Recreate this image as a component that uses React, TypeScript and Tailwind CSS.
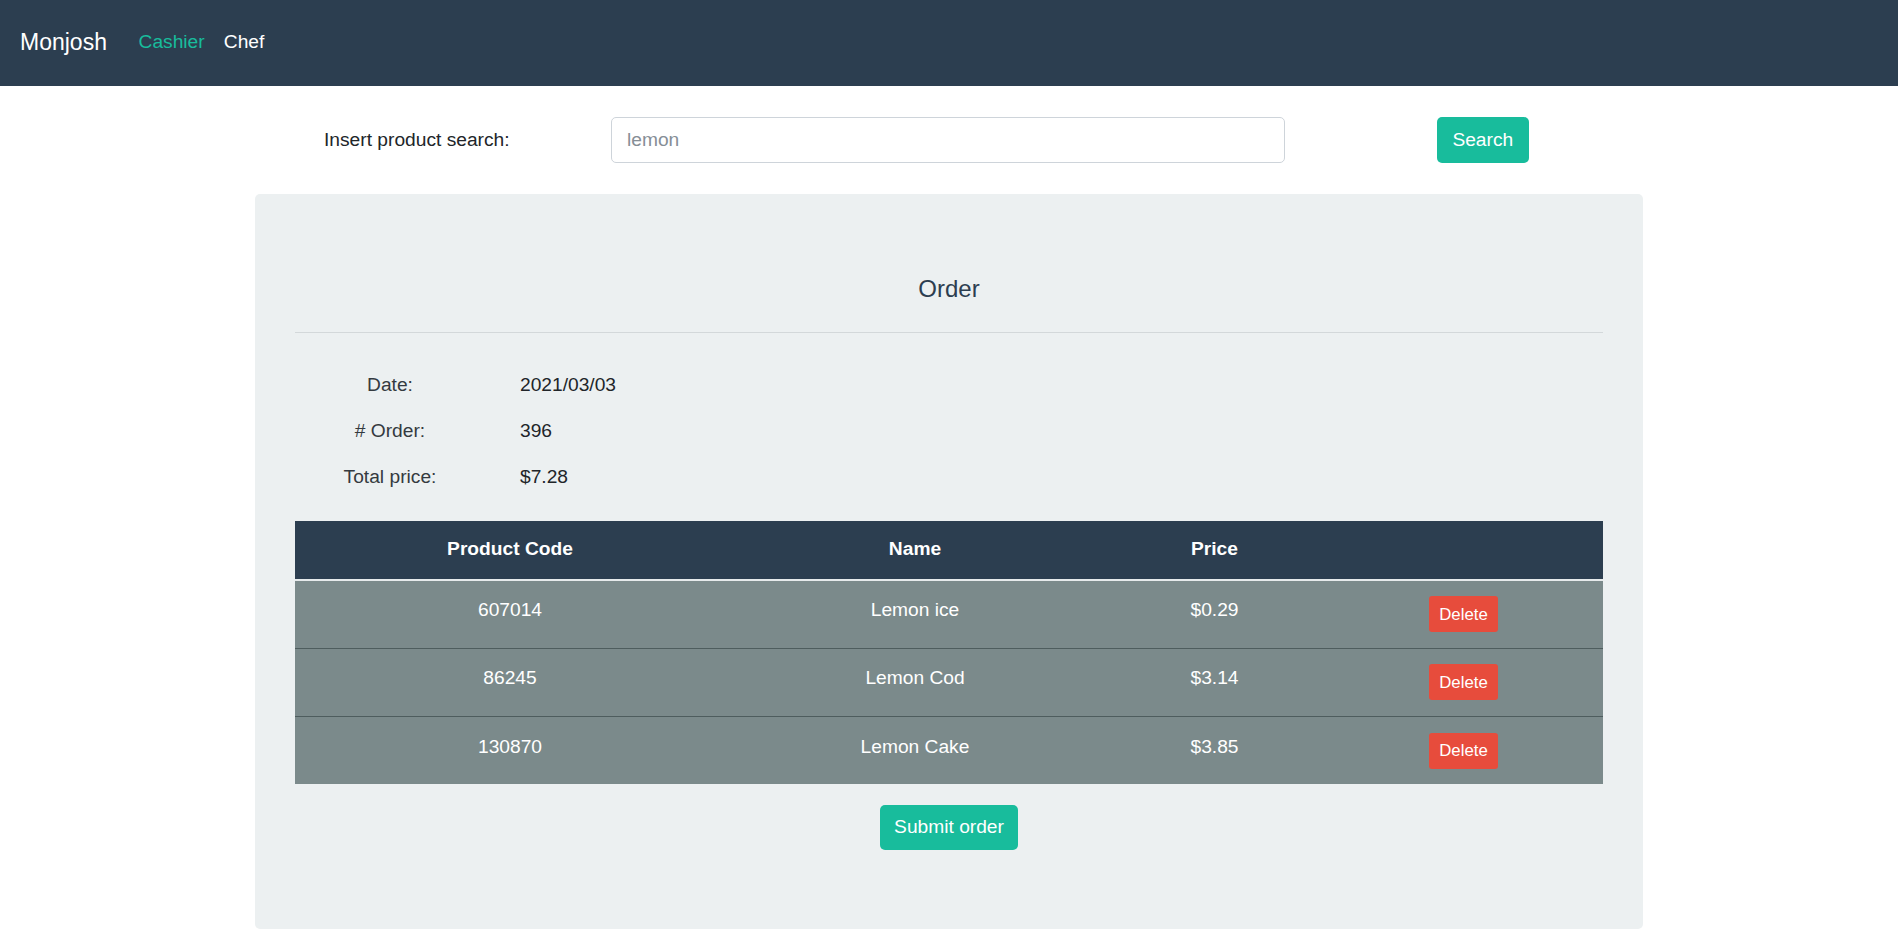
type Item = {
  code: string;
  name: string;
  price: string;
};

const items: Item[] = [
  { code: "607014", name: "Lemon ice", price: "$0.29" },
  { code: "86245", name: "Lemon Cod", price: "$3.14" },
  { code: "130870", name: "Lemon Cake", price: "$3.85" },
];

const info = [
  { label: "Date:", value: "2021/03/03" },
  { label: "# Order:", value: "396" },
  { label: "Total price:", value: "$7.28" },
];

export default function App() {
  return (
    <div className="min-h-screen bg-white font-['Liberation_Sans',Arial,sans-serif] text-[19.2px] leading-[1.5] text-[#212529]">
      {/* Navbar */}
      <nav className="h-[86px] bg-[#2c3e50] flex items-center pl-[20px] pb-[2px]">
        <span className="text-[23px] text-white mr-[22px]">Monjosh</span>
        <a href="#" className="px-[9.6px] text-[#18bc9c]">
          Cashier
        </a>
        <a href="#" className="px-[9.6px] text-white">
          Chef
        </a>
      </nav>

      <div className="w-[1388px] mx-auto">
        {/* Search */}
        <div className="flex items-center mt-[31px] h-[46px]">
          <label className="w-[356px] pl-[69px]">Insert product search:</label>
          <input
            type="text"
            placeholder="lemon"
            className="w-[674px] h-[46px] px-[15px] bg-white border border-[#ced4da] rounded-[5px] outline-none placeholder:text-[#868e96]"
          />
          <button className="ml-[152px] h-[46px] px-[15.4px] rounded-[5px] bg-[#18bc9c] text-white">
            Search
          </button>
        </div>

        {/* Order card */}
        <div className="mt-[31px] bg-[#ecf0f1] rounded-[5px] px-[40px] pt-[80px] pb-[79px]">
          <h5 className="text-center text-[24px] leading-[29px] text-[#2c3e50]">Order</h5>
          <hr className="mt-[29px] border-0 border-t border-[#d3d8da]" />

          <div className="mt-[29px]">
            {info.map((row) => (
              <div key={row.label} className="flex items-center h-[46px]">
                <div className="w-[190px] text-center text-[#343a40]">{row.label}</div>
                <div className="ml-[35px]">{row.value}</div>
              </div>
            ))}
          </div>

          <table className="mt-[21px] w-full table-fixed border-collapse text-white">
            <colgroup>
              <col className="w-[430px]" />
              <col className="w-[380px]" />
              <col className="w-[219px]" />
              <col className="w-[279px]" />
            </colgroup>
            <thead>
              <tr className="bg-[#2c3e50] border-b-2 border-[#e6eaeb]">
                <th className="py-[14.4px] font-bold text-center">Product Code</th>
                <th className="py-[14.4px] font-bold text-center">Name</th>
                <th className="py-[14.4px] font-bold text-center">Price</th>
                <th className="py-[14.4px]"></th>
              </tr>
            </thead>
            <tbody>
              {items.map((item, i) => (
                <tr
                  key={item.code}
                  className={
                    i === 0
                      ? "bg-[#7b8a8b] align-top"
                      : "bg-[#7b8a8b] align-top border-t border-[#4e5d5e]"
                  }
                >
                  <td className="pt-[15.6px] pb-[15.6px] text-center">{item.code}</td>
                  <td className="pt-[15.6px] pb-[15.6px] text-center">{item.name}</td>
                  <td className="pt-[15.6px] pb-[15.6px] text-center">{item.price}</td>
                  <td className="pt-[15.6px] pb-[15.6px] text-center">
                    <button className="h-[36px] px-[10.6px] rounded-[3px] bg-[#e74c3c] text-white text-[16.8px] leading-[1.5]">
                      Delete
                    </button>
                  </td>
                </tr>
              ))}
            </tbody>
          </table>

          <div className="mt-[21px] flex justify-center">
            <button className="h-[45px] px-[14.4px] rounded-[5px] bg-[#18bc9c] text-white">
              Submit order
            </button>
          </div>
        </div>
      </div>
    </div>
  );
}
